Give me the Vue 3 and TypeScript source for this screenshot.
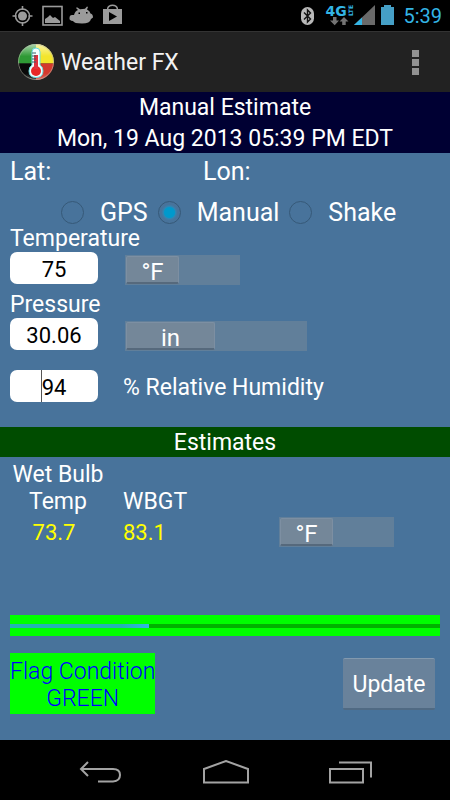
<script setup lang="ts">
import { ref } from 'vue'

const modes = ['GPS', 'Manual', 'Shake']
const mode = ref('Manual')
const temperature = ref('75')
const pressure = ref('30.06')
const humidity = ref('94')
const metricTemp = ref(false)
const metricPressure = ref(false)
const metricResult = ref(false)
const progress = ref(32.4)
</script>

<template>
  <div class="screen">
    <header class="status">
      <svg class="status-left" viewBox="0 0 124 31" aria-hidden="true">
        <g fill="none" stroke="#9b9b9b" stroke-width="1.6">
          <circle cx="22.500" cy="16" r="7" />
          <path d="M22.500 6v4M22.500 22v4M12.500 16h4M28.500 16h4" />
          <rect x="43" y="6.500" width="19" height="18.500" />
        </g>
        <g fill="#9b9b9b">
          <circle cx="22.500" cy="16" r="4.500" />
          <path d="M45 23v-4l3-2 2-2 3 3 2-1 5 4v2z" />
          <path d="M74 15q1-4 4-5l-2-2 1-.8 3 2q3-.5 5-.5l2-2.200 1 .6-1 2.400q3 1.500 3.500 4 2.500.5 2.500 4l-2 1.500q-1 4.500-9 4.500t-9-2.500q-4-.5-3.500-3 0-3 2.500-3z" />
          <path d="M103 9h4V8q1-3.500 5.500-3.500T118 8v1h4v15h-19zM108.500 9h8V8q-1-2-4-2t-4 2z" fill-rule="evenodd" />
        </g>
        <path d="M109 12v9l8-4.500z" fill="#000" />
        <path d="M78.500 12.500h1.500v1.500h-1.500zM86 12h1.500v1.500H86z" fill="#000" />
      </svg>
      <div class="status-right">
        <svg class="radio-icons" viewBox="0 0 96 31" aria-hidden="true">
          <rect x="1" y="7" width="13" height="18" rx="6.500" fill="#b9b9b9" />
          <path d="M4 12.500l6.500 6.500L7.500 22V10l3 3L4 19.500" fill="none" stroke="#111" stroke-width="1.400" />
          <text class="net" x="25.500" y="15.500">4G</text>
          <text class="lte" transform="translate(53 16) rotate(-90)">LTE</text>
          <path d="M33 17h3.500v3.500h2.500L34.700 25.200 30 20.500h3zM42.200 25h3.500v-3.500H48.500L44 17l-4.500 4.500h2.700z" fill="#737373" />
          <path d="M54 25L75 5v20z" fill="#696969" />
          <path d="M54 25l8-7.600V25z" fill="#33b5e5" />
          <path d="M81 7h3V5h7v2h3v18H81z" fill="#459fc6" />
        </svg>
        <time class="clock">5:39</time>
      </div>
    </header>

    <div class="action-bar">
      <svg class="logo" viewBox="0 0 36 38" aria-hidden="true">
        <defs>
          <clipPath id="disc"><circle cx="18" cy="19" r="18" /></clipPath>
          <linearGradient id="shine" x1="0" y1="0" x2="0" y2="1">
            <stop offset="0" stop-color="#fff" stop-opacity=".65" />
            <stop offset=".35" stop-color="#fff" stop-opacity="0" />
            <stop offset=".8" stop-color="#fff" stop-opacity="0" />
            <stop offset="1" stop-color="#fff" stop-opacity=".3" />
          </linearGradient>
        </defs>
        <g clip-path="url(#disc)">
          <path d="M0 0h18v20.500H0z" fill="#2f9a35" />
          <path d="M18 0h18v20.500H18z" fill="#f3e52c" />
          <path d="M0 20.500h18V38H0z" fill="#090909" />
          <path d="M18 20.500h18V38H18z" fill="#d3392d" />
          <path d="M0 0h36v38H0z" fill="url(#shine)" />
        </g>
        <circle cx="18" cy="19" r="17.500" fill="none" stroke="#b6b6a7" stroke-opacity=".6" />
        <path d="M14 9q0-4 4-4t4 4v13q3 2 3 6 0 6.500-7 6.500T11 28q0-4 3-6z" fill="#f4ffff" stroke="#67dce0" />
        <circle cx="18" cy="28" r="5" fill="#e82727" />
        <path d="M16 12h4v14h-4z" fill="#df3340" />
        <path d="M14 10h4M14 13h4M14 16h4M14 19h4" stroke="#35636a" />
      </svg>
      <h1>Weather FX</h1>
      <button class="overflow" type="button" aria-label="More options">
        <i></i><i></i><i></i>
      </button>
    </div>

    <div class="heading">
      <div>Manual Estimate</div>
      <div>Mon, 19 Aug 2013 05:39 PM EDT</div>
    </div>

    <main>
      <div class="coords"><span>Lat:</span><span>Lon:</span></div>

      <div class="modes" role="radiogroup" aria-label="Source">
        <label v-for="m in modes" :key="m">
          <input v-model="mode" type="radio" name="mode" :value="m" />
          <span>{{ m }}</span>
        </label>
      </div>

      <div class="fields">
        <label for="temperature">Temperature</label>
        <div class="row">
          <input id="temperature" v-model="temperature" type="text" inputmode="decimal" />
          <button class="switch" type="button" role="switch" :aria-checked="metricTemp" @click="metricTemp = !metricTemp">
            <span>{{ metricTemp ? '°C' : '°F' }}</span>
          </button>
        </div>
        <label for="pressure">Pressure</label>
        <div class="row">
          <input id="pressure" v-model="pressure" type="text" inputmode="decimal" />
          <button class="switch wide" type="button" role="switch" :aria-checked="metricPressure" @click="metricPressure = !metricPressure">
            <span>{{ metricPressure ? 'mb' : 'in' }}</span>
          </button>
        </div>
        <div class="row humidity">
          <div class="caret-box">
            <input id="humidity" v-model="humidity" type="text" inputmode="decimal" />
            <i class="caret"></i>
          </div>
          <label for="humidity">% Relative Humidity</label>
        </div>
      </div>

      <h2>Estimates</h2>

      <div class="results">
        <div class="result bulb">
          <span>Wet Bulb<br />Temp</span>
          <output>73.7</output>
        </div>
        <div class="result">
          <span>WBGT</span>
          <output>83.1</output>
        </div>
        <button class="switch" type="button" role="switch" :aria-checked="metricResult" @click="metricResult = !metricResult">
          <span>{{ metricResult ? '°C' : '°F' }}</span>
        </button>
      </div>

      <div class="gauge"><div class="track"><div class="fill" :style="{ width: progress + '%' }"></div></div></div>

      <div class="bottom">
        <div class="flag">Flag Condition<br />GREEN</div>
        <button class="update" type="button">Update</button>
      </div>
    </main>

    <nav>
      <button type="button" aria-label="Back">
        <svg viewBox="0 0 44 26" aria-hidden="true"><path d="M10 2L3 9l7 7M3 9h32q7 0 7 6t-7 6.500H20" /></svg>
      </button>
      <button type="button" aria-label="Home">
        <svg viewBox="0 0 48 26" aria-hidden="true"><path d="M2 22.500V9L24 1l22 8v13.500z" /></svg>
      </button>
      <button type="button" aria-label="Recent apps">
        <svg viewBox="0 0 44 26" aria-hidden="true"><path d="M1 9h33v13.500H1zM10 2.500h32v15" /></svg>
      </button>
    </nav>
  </div>
</template>

<style>
body {
  background: #000;
}
</style>

<style scoped>
* {
  box-sizing: border-box;
}
.screen {
  min-height: 100vh;
  display: flex;
  flex-direction: column;
  font: 23px/27px Roboto, 'Noto Sans', sans-serif;
  color: #fff;
  background: #000;
}
button {
  font: inherit;
  color: inherit;
  border: 0;
  padding: 0;
  background: none;
}
.status {
  height: 31px;
  display: flex;
  justify-content: space-between;
}
.status-left {
  width: 124px;
  height: 31px;
}
.status-right {
  display: flex;
  gap: 7px;
  padding-right: 8px;
}
.radio-icons {
  width: 96px;
  height: 31px;
}
.net,
.lte {
  font: bold 14px 'DejaVu Sans', sans-serif;
  fill: #33b5e5;
}
.lte {
  font-size: 6px;
}
.clock {
  font-size: 20px;
  line-height: 33px;
  color: #33b5e5;
}
.action-bar {
  height: 61px;
  padding: 0 24px 0 18px;
  display: flex;
  align-items: center;
  background: #222;
  border-top: 1px solid #333;
}
.logo {
  width: 36px;
  height: 38px;
}
h1 {
  margin: 0 auto 0 7px;
  font-size: 23px;
  font-weight: 400;
  color: #f3f3f3;
}
.overflow {
  width: 22px;
  display: flex;
  flex-direction: column;
  align-items: center;
  gap: 2px;
}
.overflow i {
  width: 7px;
  height: 7px;
  background: #929292;
}
.heading {
  background: #000033;
  text-align: center;
  line-height: 31px;
  height: 61px;
  overflow: hidden;
}
main {
  flex: 1;
  background: #48739b;
}
.coords {
  display: grid;
  grid-template-columns: 193px 1fr;
  padding: 5px 10px;
  font-size: 25px;
}
.modes {
  display: flex;
  padding: 9px 0 0 61px;
  gap: 10px;
  font-size: 25px;
}
.modes label {
  display: flex;
  align-items: center;
  gap: 16px;
}
.modes input {
  appearance: none;
  width: 23px;
  height: 23px;
  margin: 0;
  border: 1px solid #365978;
  border-radius: 50%;
}
.modes input:checked {
  background: radial-gradient(circle, #0099cc 0 5px, #3086b4 6px, transparent 8px);
}
.fields {
  display: flex;
  flex-direction: column;
  align-items: flex-start;
  padding: 0 10px 25px;
}
.fields > label {
  line-height: 26px;
}
.fields > label + .row + label {
  line-height: 27px;
}
.row {
  display: flex;
  align-items: flex-start;
  gap: 27px;
  height: 39px;
}
.row input {
  display: block;
  width: 88px;
  height: 32px;
  padding: 2px 0 0;
  border: 0;
  border-radius: 7px;
  background: #fff;
  color: #000;
  text-align: center;
  font: inherit;
  font-size: 22px;
}
.humidity {
  align-items: center;
  gap: 25px;
  height: 32px;
  margin-top: 13px;
}
.humidity label {
  padding-top: 2px;
}
.caret-box {
  position: relative;
}
.caret {
  position: absolute;
  left: 31px;
  top: 0;
  width: 1px;
  height: 32px;
  background: #555;
}
.switch {
  width: 115px;
  height: 30px;
  margin-top: 3px;
  padding: 1px;
  background: #617f9a;
  font-size: 24px;
  line-height: 30px;
  display: flex;
}
.switch.wide {
  width: 182px;
}
.switch span {
  width: 53px;
  height: 28px;
  border-radius: 2px;
  background: #748799;
  border: 1px solid #7d8fa2;
  border-bottom: 2px solid #56697c;
}
.switch.wide span {
  width: 89px;
}
h2 {
  margin: 0;
  height: 30px;
  background: #004c00;
  text-align: center;
  font: inherit;
  line-height: 32px;
}
.results {
  display: flex;
  align-items: flex-end;
  padding: 4px 56px 0 10px;
}
.result {
  display: flex;
  flex-direction: column;
  gap: 4px;
  padding-bottom: 1px;
}
.bulb {
  width: 113px;
}
.bulb span {
  width: 96px;
  text-align: center;
}
.bulb output {
  width: 88px;
  text-align: center;
}
.result output {
  color: #ffff00;
  font-size: 22px;
}
.results .switch {
  margin-left: auto;
}
.gauge {
  height: 21px;
  margin: 68px 10px 0;
  padding-top: 9px;
  background: #00ff00;
}
.track {
  height: 4px;
  background: #00b200;
}
.fill {
  height: 4px;
  background: linear-gradient(90deg, #24b3b3 80%, #33b5e5);
}
.bottom {
  display: flex;
  justify-content: space-between;
  align-items: center;
  padding: 17px 15px 26px 10px;
}
.flag {
  padding: 5px 0 2px;
  min-width: 145px;
  background: #00ff00;
  color: #0000ff;
  text-align: center;
  white-space: nowrap;
  font-weight: 300;
}
.update {
  width: 92px;
  height: 52px;
  padding-top: 3px;
  background: #69829b;
  border-top: 1px solid #8299ae;
  border-bottom: 2px solid #506a83;
  border-radius: 2px;
}
nav {
  height: 60px;
  display: flex;
  justify-content: space-between;
  padding: 6px 75px 0 76px;
}
nav button {
  width: 48px;
  display: flex;
  align-items: center;
  justify-content: center;
}
nav svg {
  width: 44px;
  height: 26px;
  fill: none;
  stroke: #a3a3a3;
  stroke-width: 2;
}
nav button:nth-child(2) svg {
  width: 48px;
}
</style>
